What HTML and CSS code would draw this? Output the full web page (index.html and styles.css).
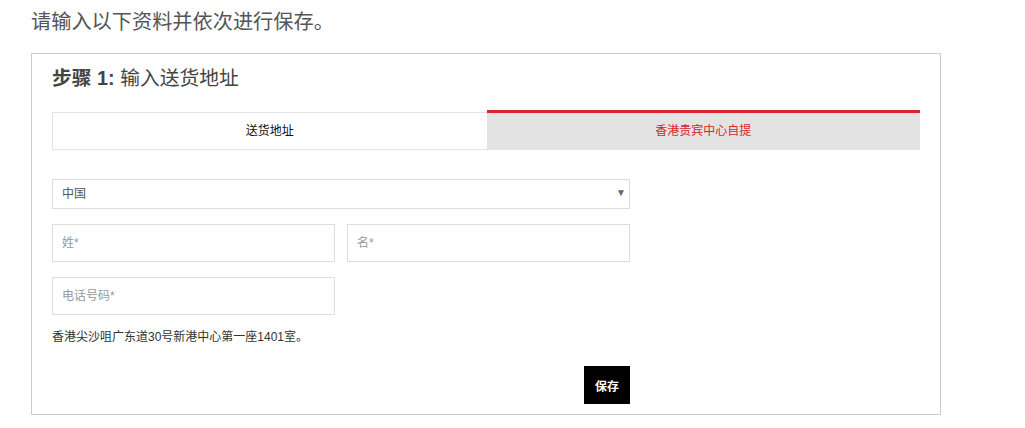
FILE: index.html
```html
<!DOCTYPE html>
<html lang="zh-CN">
<head>
    <meta charset="UTF-8">
    <meta name="viewport" content="width=device-width, initial-scale=1.0">
    <title>送货地址</title>
    <link rel="stylesheet" href="styles.css">
</head>
<body>
    <div class="page">
        <p class="intro">请输入以下资料并依次进行保存。</p>

        <div class="step-box">
            <h2 class="step-title"><b>步骤 1:</b> 输入送货地址</h2>

            <div class="tabs">
                <div class="tab">送货地址</div>
                <div class="tab active">香港贵宾中心自提</div>
            </div>

            <form class="address-form">
                <div class="select-wrap">
                    <select class="field select">
                        <option>中国</option>
                    </select>
                    <span class="arrow">&#9660;</span>
                </div>

                <div class="row">
                    <input class="field" type="text" placeholder="姓*">
                    <input class="field" type="text" placeholder="名*">
                </div>

                <div class="row">
                    <input class="field" type="text" placeholder="电话号码*">
                </div>

                <p class="address">香港尖沙咀广东道30号新港中心第一座1401室。</p>

                <div class="actions">
                    <button class="btn" type="button">保存</button>
                </div>
            </form>
        </div>
    </div>
</body>
</html>
```

FILE: styles.css
```css
* {
    margin: 0;
    padding: 0;
    box-sizing: border-box;
}

body {
    font-family: "Liberation Sans", Arial, "Noto Sans CJK SC", sans-serif;
    background: #fff;
    color: #333;
}

.page {
    padding-left: 31px;
    width: 941px;
}

.intro {
    font-size: 20.2px;
    line-height: 44px;
    color: #555;
    margin-bottom: 9px;
}

.step-box {
    border: 1px solid #ccc;
    padding: 10px 20px 10px 20px;
}

.step-title {
    font-size: 19.8px;
    font-weight: normal;
    line-height: 28px;
    color: #444;
}

.step-title b {
    font-weight: bold;
}

.tabs {
    display: flex;
    align-items: flex-end;
    margin-top: 18px;
}

.tab {
    flex: 1;
    height: 38px;
    line-height: 36px;
    text-align: center;
    font-size: 12px;
    color: #111;
    border: 1px solid #e3e3e3;
    border-right: none;
    background: #fff;
}

.tab.active {
    height: 40px;
    border: none;
    border-top: 3px solid #d9232d;
    background: #e3e3e3;
    color: #d9232d;
}

.address-form {
    width: 578px;
    margin-top: 29px;
}

.field {
    display: block;
    width: 100%;
    height: 38px;
    border: 1px solid #ddd;
    background: #fff;
    font-family: inherit;
    font-size: 12px;
    color: #555;
    padding: 0 9px;
    outline: none;
}

.field::placeholder {
    color: #999;
}

.select-wrap {
    position: relative;
}

.select {
    height: 30px;
    appearance: none;
    -webkit-appearance: none;
    border-radius: 0;
}

.arrow {
    position: absolute;
    right: 4px;
    top: 8px;
    font-size: 10px;
    color: #666;
    pointer-events: none;
}

.row {
    display: flex;
    gap: 12px;
    margin-top: 15px;
}

.row .field {
    width: 283px;
}

.address {
    margin-top: 13px;
    font-size: 12px;
    line-height: 18px;
    color: #333;
}

.actions {
    display: flex;
    justify-content: flex-end;
    margin-top: 20px;
}

.btn {
    background: #000;
    color: #fff;
    border: none;
    width: 46px;
    height: 38px;
    font-family: inherit;
    font-size: 12px;
    font-weight: bold;
    cursor: pointer;
}
```
